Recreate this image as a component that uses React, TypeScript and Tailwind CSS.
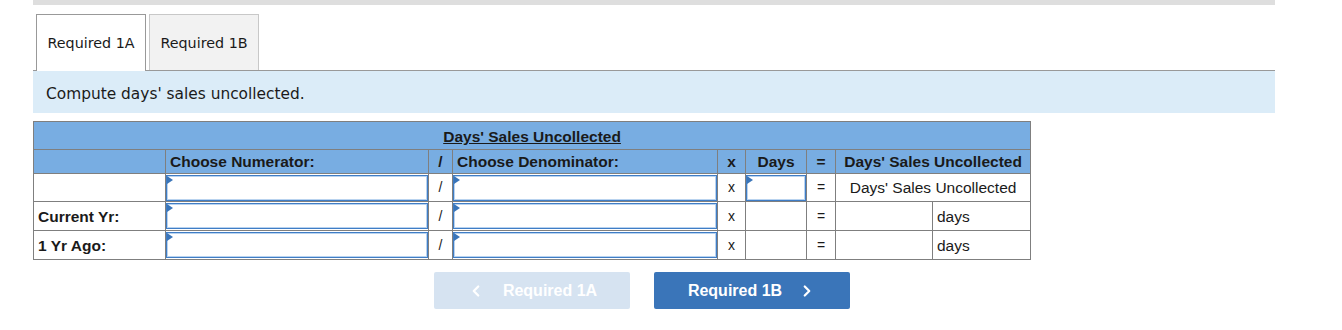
import { ChevronLeft, ChevronRight } from "lucide-react"

const cell = "border border-[#7f7f7f]"

function AnswerBox() {
  return (
    <div className="relative h-[26px] w-full border border-[#3f7dc6] bg-white shadow-[inset_0_0_0_1px_#b9d3ef]">
      <span className="absolute left-0 top-0 h-0 w-0 border-y-[4px] border-l-[6px] border-y-transparent border-l-[#3a75b9]" />
    </div>
  )
}

function DataRow({ label }: { label: string }) {
  return (
    <tr className="h-[29px]">
      <td className={`${cell} px-1 font-bold`}>{label}</td>
      <td className={`${cell} p-0`}>
        <AnswerBox />
      </td>
      <td className={`${cell} text-center text-[14px]`}>/</td>
      <td className={`${cell} p-0`}>
        <AnswerBox />
      </td>
      <td className={`${cell} text-center text-[14px]`}>x</td>
      <td className={cell}></td>
      <td className={`${cell} text-center text-[14px]`}>=</td>
      <td className={cell}></td>
      <td className={`${cell} px-1`}>days</td>
    </tr>
  )
}

export default function App() {
  return (
    <div className="min-h-[330px] bg-white px-[33px] pr-[67px]">
      <div className="h-[5px] bg-[#dedede]" />

      <div className="mt-[9px] flex gap-[3px] border-b border-[#999] pl-[3px] font-['DejaVu_Sans',sans-serif] text-[14.3px] text-[#1a1a1a]">
        <div className="-mb-px flex h-[57px] w-[110px] items-center justify-center border border-b-0 border-[#999] bg-white pt-[2px]">
          Required 1A
        </div>
        <div className="flex h-[56px] w-[110px] items-center justify-center border border-b-0 border-[#c8c8c8] bg-[#f2f2f2] pt-[2px]">
          Required 1B
        </div>
      </div>

      <div className="flex h-[42px] items-center bg-[#dbecf8] pl-[13px] pt-[5px] font-['DejaVu_Sans',sans-serif] text-[15.4px] text-[#1a1a1a]">
        Compute days' sales uncollected.
      </div>

      <table className="mt-[8px] w-[997px] table-fixed border-collapse font-['Liberation_Sans',Arial,sans-serif] text-[15.5px] text-[#1a1a1a]">
        <colgroup>
          <col className="w-[132px]" />
          <col className="w-[263px]" />
          <col className="w-[24px]" />
          <col className="w-[265px]" />
          <col className="w-[28px]" />
          <col className="w-[61px]" />
          <col className="w-[29px]" />
          <col className="w-[97px]" />
          <col className="w-[98px]" />
        </colgroup>
        <tbody>
          <tr className="h-[28px] bg-[#78ade2]">
            <td colSpan={9} className={`${cell} pt-[3px] text-center font-bold underline`}>
              Days' Sales Uncollected
            </td>
          </tr>
          <tr className="h-[23px] bg-[#78ade2] font-bold">
            <td className={cell}></td>
            <td className={`${cell} px-1`}>Choose Numerator:</td>
            <td className={`${cell} text-center`}>/</td>
            <td className={`${cell} px-1`}>Choose Denominator:</td>
            <td className={`${cell} text-center`}>x</td>
            <td className={`${cell} text-center`}>Days</td>
            <td className={`${cell} text-center`}>=</td>
            <td colSpan={2} className={`${cell} text-center`}>
              Days' Sales Uncollected
            </td>
          </tr>
          <tr className="h-[28px]">
            <td className={cell}></td>
            <td className={`${cell} p-0`}>
              <AnswerBox />
            </td>
            <td className={`${cell} text-center text-[14px]`}>/</td>
            <td className={`${cell} p-0`}>
              <AnswerBox />
            </td>
            <td className={`${cell} text-center text-[14px]`}>x</td>
            <td className={`${cell} p-0`}>
              <AnswerBox />
            </td>
            <td className={`${cell} text-center text-[14px]`}>=</td>
            <td colSpan={2} className={`${cell} text-center`}>
              Days' Sales Uncollected
            </td>
          </tr>
          <DataRow label="Current Yr:" />
          <DataRow label="1 Yr Ago:" />
        </tbody>
      </table>

      <div className="mt-[12px] flex gap-6 pl-[401px] font-['Liberation_Sans',Arial,sans-serif] text-[16px] font-bold text-white">
        <button className="flex h-[37px] w-[196px] items-center justify-center gap-[18px] rounded-[2px] bg-[#d6e3f1]">
          <ChevronLeft size={18} strokeWidth={3} />
          Required 1A
        </button>
        <button className="flex h-[37px] w-[196px] items-center justify-center gap-[16px] rounded-[2px] bg-[#3a75b9]">
          Required 1B
          <ChevronRight size={18} strokeWidth={3} />
        </button>
      </div>
    </div>
  )
}
